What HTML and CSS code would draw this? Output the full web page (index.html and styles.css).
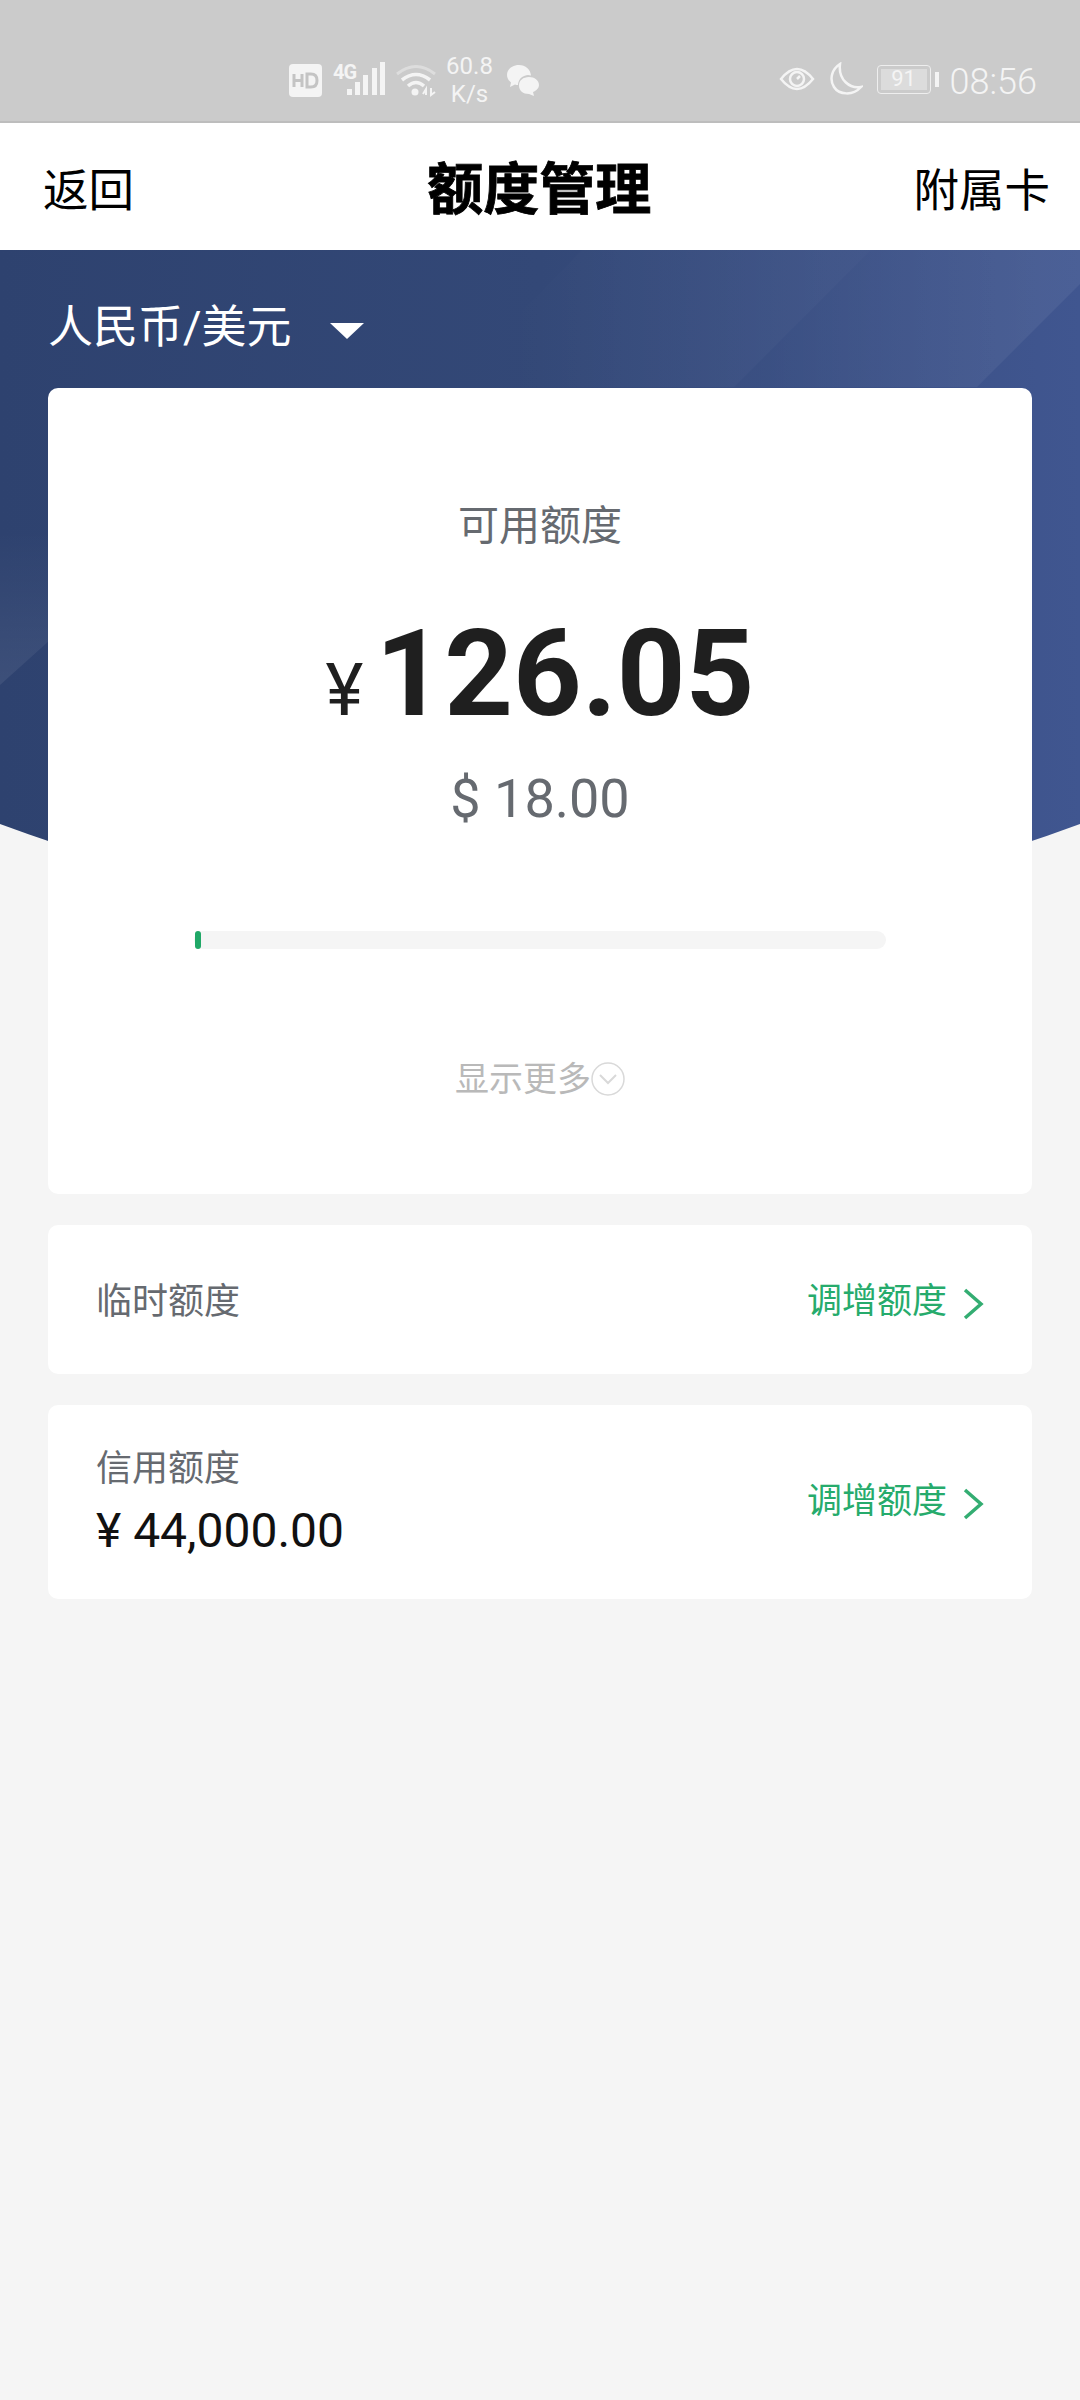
FILE: index.html
```html
<!DOCTYPE html>
<html lang="zh-CN">
<head>
  <meta charset="UTF-8">
  <meta name="viewport" content="width=device-width, initial-scale=1.0">
  <title>额度管理</title>
  <link rel="stylesheet" href="styles.css">
</head>
<body>
  <div class="status-bar">
    <div class="status-center">
      <svg class="icon-hd" width="33" height="33" viewBox="0 0 33 33"><rect width="33" height="33" rx="4" fill="#f4f4f4"/><path d="M5 10v13M5 16.500h8M13 10v13M18 10v13h4q6 0 6-6.500t-6-6.500z" fill="none" stroke="#c4c4c4" stroke-width="3"/></svg>
      <div class="signal">
        <span class="net">4G</span>
        <svg width="38" height="34" viewBox="0 0 38 34" fill="#f4f4f4"><rect x="0" y="27" width="5" height="6"/><rect x="8" y="20" width="5" height="13"/><rect x="16" y="13" width="5" height="20"/><rect x="25" y="6" width="5" height="27"/><rect x="33" y="0" width="5" height="33"/></svg>
      </div>
      <svg class="icon-wifi" width="42" height="34" viewBox="0 0 42 34" fill="none" stroke="#f4f4f4"><path d="M2 11Q21-4 40 11" stroke-width="3" opacity=".45"/><path d="M7 17Q21 6 35 17" stroke-width="3.500"/><path d="M13 23Q21 16 29 23" stroke-width="3.500"/><circle cx="20" cy="29" r="3.500" fill="#f4f4f4" stroke="none"/><path d="M28 31l3-5v6M36 25v7l4-3" stroke-width="2"/></svg>
      <div class="speed"><span>60.8</span><span>K/s</span></div>
      <svg class="icon-wechat" width="35" height="32" viewBox="0 0 35 32" fill="#f4f4f4"><path d="M13 1C6 1 1 5.500 1 11c0 3 1.500 5.500 4 7.500L4 23l5-2.500q1.500.5 3 .5a10 10 0 0 1 13-9.500C24.500 5.500 19.500 1 13 1z"/><path d="M23 13c-6 0-10 3.500-10 8.500S17 30 23 30l5 2-1-4c3.500-1.500 6-4 6-7 0-4.500-4.500-8-10-8z"/></svg>
    </div>
    <div class="status-right">
      <svg width="36" height="28" viewBox="0 0 36 28" fill="none" stroke="#f4f4f4" stroke-width="2.500"><path d="M2 14Q18-6 34 14 18 34 2 14z"/><circle cx="18" cy="14" r="7"/><path d="M18 14l3-3"/></svg>
      <svg class="icon-moon" width="34" height="34" viewBox="0 0 34 34" fill="none" stroke="#f4f4f4" stroke-width="2.500"><path d="M11 2C3 7 0 17 5 25c5 8 19 9 27 0-11 2-23-7-21-23z"/></svg>
      <div class="battery"><span class="battery-level">91</span></div>
      <span class="time">08:56</span>
    </div>
  </div>

  <header class="nav">
    <span class="nav-link">返回</span>
    <h1 class="nav-title">额度管理</h1>
    <span class="nav-link">附属卡</span>
  </header>

  <main class="content">
    <svg class="hero-bg" width="1080" height="640" viewBox="0 0 1080 640">
      <defs>
        <linearGradient id="heroFill" x1="0" y1="0" x2="1" y2="0">
          <stop offset="0" stop-color="#2e426f"/>
          <stop offset=".5" stop-color="#334877"/>
          <stop offset="1" stop-color="#405690"/>
        </linearGradient>
        <linearGradient id="band1" gradientUnits="userSpaceOnUse" x1="500" y1="0" x2="830" y2="0">
          <stop offset="0" stop-color="#fff" stop-opacity="0"/>
          <stop offset="1" stop-color="#fff" stop-opacity=".04"/>
        </linearGradient>
        <linearGradient id="band2" gradientUnits="userSpaceOnUse" x1="760" y1="0" x2="1040" y2="0">
          <stop offset="0" stop-color="#fff" stop-opacity=".01"/>
          <stop offset="1" stop-color="#fff" stop-opacity=".06"/>
        </linearGradient>
        <linearGradient id="band3" gradientUnits="userSpaceOnUse" x1="0" y1="280" x2="0" y2="430">
          <stop offset="0" stop-color="#fff" stop-opacity="0"/>
          <stop offset="1" stop-color="#fff" stop-opacity=".07"/>
        </linearGradient>
      </defs>
      <path d="M0 0H1080V574Q540 774 0 574z" fill="url(#heroFill)"/>
      <path d="M582 0H871L734 137H448z" fill="url(#band1)"/>
      <path d="M871 0H1080V34L977 137H734z" fill="url(#band2)"/>
      <path d="M0 435L50 390V280H0z" fill="url(#band3)"/>
    </svg>

    <div class="currency">
      <span>人民币/美元</span>
      <span class="caret"></span>
    </div>

    <section class="card limit-card">
      <div class="limit-label">可用额度</div>
      <div class="limit-amount"><span class="yen">¥</span>126.05</div>
      <div class="limit-usd">$ 18.00</div>
      <div class="progress"><div class="progress-fill"></div></div>
      <div class="more">
        <span>显示更多</span>
        <svg width="34" height="34" viewBox="0 0 34 34" fill="none" stroke="#d9d9d9" stroke-width="1.500"><circle cx="17" cy="17" r="16"/><path d="M9 13l8 8 8-8" stroke-width="2"/></svg>
      </div>
    </section>

    <section class="card row row-temp">
      <div class="row-label">临时额度</div>
      <div class="row-action">
        <span>调增额度</span>
        <svg class="chevron" width="22" height="34" viewBox="0 0 22 34" fill="none" stroke="#34ad72" stroke-width="3.500"><path d="M3 3l16 14L3 31"/></svg>
      </div>
    </section>

    <section class="card row row-credit">
      <div>
        <div class="row-label">信用额度</div>
        <div class="row-value">¥ 44,000.00</div>
      </div>
      <div class="row-action">
        <span>调增额度</span>
        <svg class="chevron" width="22" height="34" viewBox="0 0 22 34" fill="none" stroke="#34ad72" stroke-width="3.500"><path d="M3 3l16 14L3 31"/></svg>
      </div>
    </section>
  </main>
</body>
</html>
```

FILE: styles.css
```css
* {
  box-sizing: border-box;
}
body {
  margin: 0;
  height: 2400px;
  overflow: hidden;
  background-color: #f5f5f5;
  font-family: Roboto, "Noto Sans CJK SC", sans-serif;
  color: #000;
}

/* status bar */
.status-bar {
  height: 123px;
  padding: 48px 43px 0 289px;
  display: flex;
  justify-content: space-between;
  align-items: flex-start;
  background-color: #cbcbcb;
  border-bottom: 2px solid #bdbdbd;
  color: #f4f4f4;
}
.status-center {
  display: flex;
  align-items: center;
  height: 64px;
}
.icon-hd {
  margin-top: 1px;
}
.signal {
  display: flex;
  align-items: flex-end;
  margin-left: 11px;
  margin-top: -2px;
}
.net {
  font-size: 20px;
  font-weight: 700;
  line-height: 20px;
  letter-spacing: -1px;
  align-self: flex-start;
  margin-right: -9px;
}
.icon-wifi {
  margin-left: 10px;
}
.speed {
  display: flex;
  flex-direction: column;
  align-items: center;
  margin-left: 9px;
  font-size: 24px;
  line-height: 28px;
}
.icon-wechat {
  margin-left: 13px;
}
.status-right {
  display: flex;
  align-items: center;
  height: 64px;
  margin-top: -1px;
}
.icon-moon {
  margin-left: 14px;
}
.battery {
  position: relative;
  width: 54px;
  height: 29px;
  margin-left: 14px;
  padding: 3px;
  border: 1.5px solid #eee;
  border-radius: 4px;
  display: flex;
}
.battery::after {
  content: "";
  position: absolute;
  right: -9px;
  top: 6px;
  width: 4px;
  height: 15px;
  background-color: #f4f4f4;
}
.battery-level {
  flex: 1;
  background-color: #dcdcdc;
  font-size: 22px;
  line-height: 20px;
  text-align: center;
}
.time {
  margin: 5px 0 0 19px;
  font-size: 36px;
  font-weight: 300;
}

/* nav */
.nav {
  height: 127px;
  padding: 0 30px 0 43px;
  display: flex;
  justify-content: space-between;
  align-items: center;
  background-color: #fff;
}
.nav-link {
  font-size: 45.5px;
}
.nav-title {
  margin: 0 0 4px 31px;
  font-size: 56px;
  font-weight: 700;
  -webkit-text-stroke: 0.8px #000;
}

/* content */
.content {
  position: relative;
  padding: 0 48px;
}
.hero-bg {
  position: absolute;
  left: 0;
  top: 0;
}
.currency {
  position: relative;
  height: 138px;
  padding-top: 46px;
  display: flex;
  align-items: flex-start;
  color: #fff;
  font-size: 45px;
  line-height: 64px;
}
.caret {
  margin: 27px 0 0 38px;
  border-left: 17px solid transparent;
  border-right: 17px solid transparent;
  border-top: 16px solid #fff;
}
.card {
  position: relative;
  background-color: #fff;
  border-radius: 10px;
}
.limit-card {
  height: 806px;
  padding-top: 110px;
  display: flex;
  flex-direction: column;
  align-items: center;
}
.limit-label {
  font-size: 41px;
  line-height: 56px;
  color: #666a70;
}
.limit-amount {
  margin-top: 49px;
  display: flex;
  align-items: baseline;
  font-size: 120px;
  line-height: 142px;
  font-weight: 700;
  color: #1f1f1f;
}
.yen {
  font-size: 72px;
  font-weight: 400;
  margin-right: 12px;
}
.limit-usd {
  margin-top: 5px;
  font-size: 54px;
  line-height: 64px;
  color: #666a70;
}
.progress {
  width: 692px;
  height: 18px;
  margin-top: 100px;
  border-radius: 9px;
  background-color: #f5f5f5;
}
.progress-fill {
  width: 6px;
  height: 18px;
  margin-left: 1px;
  border-radius: 3px;
  background-color: #20a867;
}
.more {
  margin-top: 105px;
  display: flex;
  align-items: center;
  font-size: 34px;
  line-height: 50px;
  color: #b9b9b9;
}
.row {
  margin-top: 31px;
  padding: 0 48px;
  display: flex;
  justify-content: space-between;
  align-items: center;
}
.row-temp {
  height: 149px;
  padding-top: 5px;
}
.row-credit {
  height: 194px;
}
.row-label {
  font-size: 36px;
  line-height: 52px;
  color: #666a70;
}
.row-value {
  margin-top: 5px;
  font-size: 48px;
  line-height: 62px;
  color: #111;
}
.row-action {
  display: flex;
  align-items: center;
  gap: 15px;
  font-size: 35px;
  line-height: 52px;
  color: #26ab6c;
}
.chevron {
  margin-top: 3px;
}
```
